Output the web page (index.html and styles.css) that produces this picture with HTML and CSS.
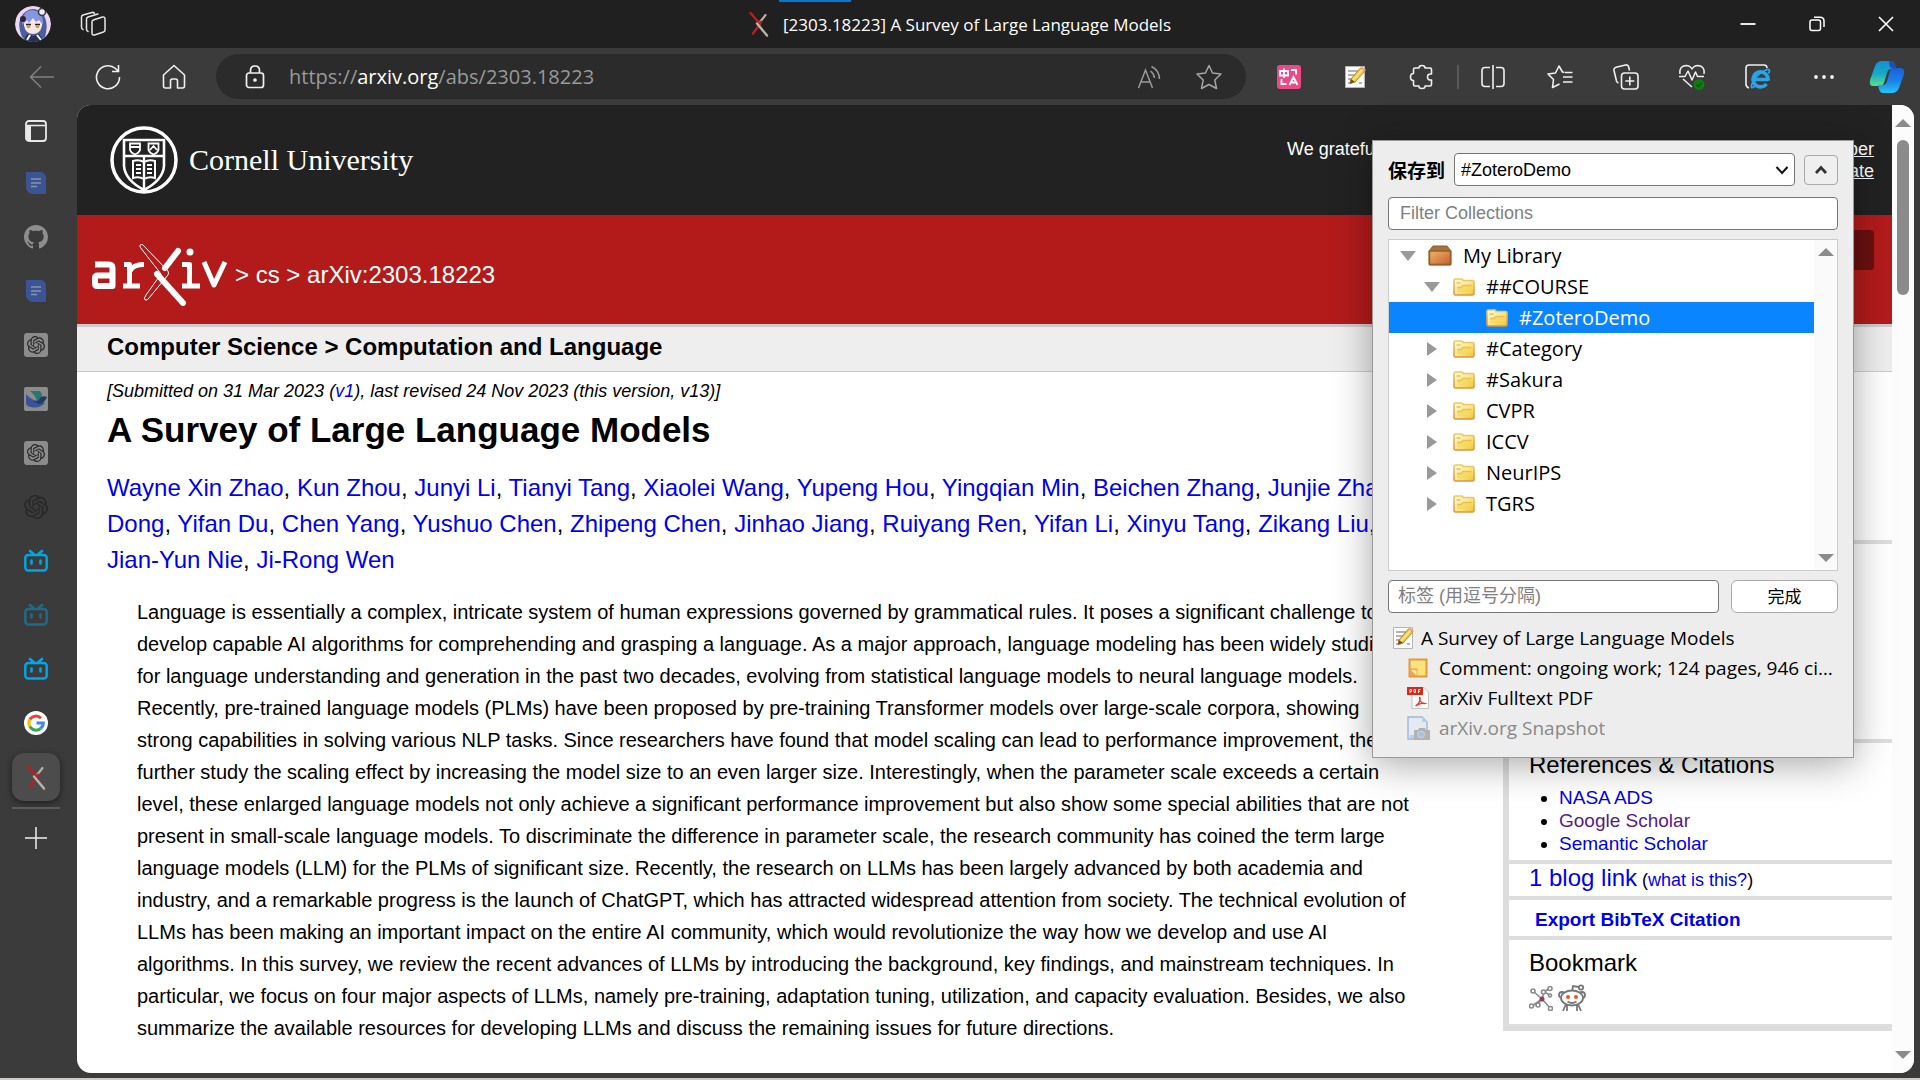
FILE: index.html
```html
<!DOCTYPE html>
<html lang="zh-CN">
<head>
<meta charset="utf-8">
<title>[2303.18223] A Survey of Large Language Models</title>
<link rel="stylesheet" href="styles.css">
</head>
<body>
<svg class="defs" width="0" height="0" aria-hidden="true">
  <defs>
    <linearGradient id="gFold" x1="0" y1="0" x2="1" y2="1"><stop offset="0" stop-color="#fffbe6"/><stop offset=".5" stop-color="#fbe690"/><stop offset="1" stop-color="#efc52c"/></linearGradient>
    <linearGradient id="gFoldEdge" x1="0" y1="0" x2="0" y2="1"><stop offset="0" stop-color="#e9cc62"/><stop offset="1" stop-color="#dd9544"/></linearGradient>
    <linearGradient id="gBox" x1="0" y1="0" x2="1" y2="1"><stop offset="0" stop-color="#eab566"/><stop offset="1" stop-color="#c9602f"/></linearGradient>
    <linearGradient id="gCopA" x1="0" y1="0" x2="0" y2="1"><stop offset="0" stop-color="#1290d8"/><stop offset=".5" stop-color="#14a9c4"/><stop offset="1" stop-color="#5fdc8a"/></linearGradient>
    <linearGradient id="gCopB" x1="0" y1="0" x2="0" y2="1"><stop offset="0" stop-color="#1c5fd8"/><stop offset=".5" stop-color="#1a7fe8"/><stop offset="1" stop-color="#27c3f5"/></linearGradient>
  </defs>
  <symbol id="folder" viewBox="0 0 22 18"><path d="M1 2.500Q1 1 2.500 1H8.500Q10 1 10 2.500H19.500Q21 2.500 21 4V15.500Q21 17 19.500 17H2.500Q1 17 1 15.500Z" fill="url(#gFold)" stroke="url(#gFoldEdge)" stroke-width="1.600"/><path d="M4 14V9.500H8L10 7.500H18.500V14Z" fill="#f3d552" opacity=".6"/><path d="M3.500 5H7.500M4 9.500H8L10 7.500H18.500" fill="none" stroke="#e8c24e" stroke-width="1.300"/></symbol>
  <symbol id="note" viewBox="0 0 22 24"><path d="M1.500 1.500H20.500V22.500H1.500Z" fill="#fbfbfb" stroke="#b5b5b5"/><path d="M4 6H14M4 10H12M4 14H9M4 18H8M15 18H18" stroke="#9a9a9a" stroke-width="1.400"/><path d="M6 18.500L7 14L16.500 3L20.500 6.500L11 17Z" fill="#f7c948" stroke="#b98518"/><path d="M16.500 3L18 1.500L22 5L20.500 6.500Z" fill="#f0a07c"/><path d="M6 18.500L7 14L11 17Z" fill="#6b5030"/><path d="M9 15L18.500 4.500" stroke="#fdeaa0" stroke-width="1.200"/></symbol>
  <symbol id="xfav" viewBox="0 0 20 26"><path d="M16.500 4L11 11" stroke="#b9b0a8" stroke-width="2.200" stroke-linecap="round"/><path d="M1.500 2L11 13M8.500 16.500L4 22.500" fill="none" stroke="#b81f25" stroke-width="2.400" stroke-linecap="round"/><path d="M12 10.500L10.500 15" stroke="#b81f25" stroke-width="2" stroke-linecap="round"/><path d="M8 12.500L18 24.500" stroke="#bdb5ad" stroke-width="2.400" stroke-linecap="round"/></symbol>
  <symbol id="doc" viewBox="0 0 20 22"><path d="M0 0H15Q20 1 20 6V22H6Q1 21 0 16Z" fill="#3a5496"/><path d="M5 7H15M5 11H15M5 14.500H11" stroke="#8a93a8" stroke-width="1.600"/></symbol>
  <symbol id="knot" viewBox="0 0 24 24"><path fill="currentColor" d="M22.282 9.821a5.985 5.985 0 0 0-.516-4.910 6.046 6.046 0 0 0-6.510-2.900A6.065 6.065 0 0 0 4.981 4.182a5.985 5.985 0 0 0-3.998 2.900 6.046 6.046 0 0 0 .743 7.097 5.980 5.980 0 0 0 .510 4.911 6.051 6.051 0 0 0 6.515 2.900A5.985 5.985 0 0 0 13.260 24a6.056 6.056 0 0 0 5.772-4.206 5.990 5.990 0 0 0 3.998-2.900 6.056 6.056 0 0 0-.748-7.073zM13.260 22.430a4.476 4.476 0 0 1-2.876-1.041l.142-.080 4.778-2.758a.795.795 0 0 0 .393-.681v-6.737l2.020 1.169a.071.071 0 0 1 .038.052v5.583a4.504 4.504 0 0 1-4.495 4.493zM3.600 18.304a4.470 4.470 0 0 1-.535-3.014l.142.085 4.783 2.759a.771.771 0 0 0 .781 0l5.843-3.369v2.332a.080.080 0 0 1-.033.062L9.740 19.950a4.500 4.500 0 0 1-6.140-1.646zM2.341 7.896a4.485 4.485 0 0 1 2.366-1.973V11.600a.766.766 0 0 0 .388.677l5.815 3.354-2.020 1.169a.076.076 0 0 1-.071 0l-4.830-2.787A4.504 4.504 0 0 1 2.341 7.872zm16.597 3.855l-5.833-3.387L15.119 7.200a.076.076 0 0 1 .071 0l4.830 2.791a4.494 4.494 0 0 1-.676 8.105v-5.678a.790.790 0 0 0-.406-.667zm2.010-3.023l-.141-.085-4.774-2.782a.776.776 0 0 0-.785 0L9.409 9.230V6.897a.066.066 0 0 1 .028-.061l4.830-2.787a4.500 4.500 0 0 1 6.680 4.660zm-12.640 4.135l-2.020-1.164a.080.080 0 0 1-.038-.057V6.075a4.500 4.500 0 0 1 7.375-3.453l-.142.080L8.704 5.460a.795.795 0 0 0-.393.681zm1.097-2.365l2.602-1.500 2.607 1.500v2.999l-2.597 1.500-2.607-1.500z"/></symbol>
  <symbol id="gpt" viewBox="0 0 24 24"><rect width="24" height="24" rx="3" fill="#8c8c8c"/><use href="#knot" x="3" y="3" width="18" height="18"/></symbol>
  <symbol id="tv" viewBox="0 0 24 24"><rect x="1.300" y="6" width="21.400" height="15.500" rx="3" fill="none" stroke="#00a7e8" stroke-width="2.400"/><path d="M6 2L9.500 5M18 2L14.500 5M7.500 11.500V14.500M16.500 11.500V14.500" stroke="#00a7e8" stroke-width="2.600" stroke-linecap="round"/></symbol>
</svg>

<div class="browser">
  <header class="titlebar">
    <div class="title-left">
      <svg class="avatar" width="36" height="36" viewBox="0 0 36 36"><circle cx="18" cy="18" r="18" fill="#ecd6f0"/><path d="M7 31Q1 17 8 8Q18-2 28 8Q34 17 30 31L25 35H11Z" fill="#4b5e9e"/><path d="M9 20V11Q18 2 27 11V20Q25 28 18 28Q11 28 9 20Z" fill="#f7e6e4"/><path d="M7 19Q7 5 17 4Q29 5 28 19L24 14L21 16L18 12L14 17L12 14Z" fill="#8795e0"/><path d="M11 18.500H16M20 18.500H25" stroke="#1f1e2a" stroke-width="1.500"/><circle cx="13.500" cy="20.500" r="1.800" fill="#d09a30"/><circle cx="22.500" cy="20.500" r="1.800" fill="#d09a30"/><path d="M8 36L12 28L18 30L24 28L29 36Z" fill="#2a3157"/><path d="M12 34L15 29M22 29L26 34" stroke="#fff" stroke-width="2"/><circle cx="8" cy="13" r="3" fill="#2b2840"/><circle cx="27" cy="6" r="3.500" fill="#eee" stroke="#37374a" stroke-width="1.500"/></svg>
      <svg width="26" height="26" viewBox="0 0 26 26" fill="none" stroke="#e6e6e6" stroke-width="1.500" stroke-linejoin="round" stroke-linecap="round"><path d="M12 11Q12 9.500 13.300 9L22.500 6Q25 5.500 25 8V19Q25 20.500 23.500 21L14.500 24Q12 24.500 12 22Z"/><path d="M8 20.500Q6.500 20 6.500 18V8Q6.500 6.500 8 6L18 3"/><path d="M3 18.500Q1.500 18 1.500 16V6Q1.500 4.500 3 4L12 1.500Q14 1 14.500 2.500"/></svg>
    </div>
    <div class="tab-title"><svg width="20" height="26"><use href="#xfav"/></svg><span>[2303.18223] A Survey of Large Language Models</span></div>
    <div class="win-controls">
      <button aria-label="Minimize"><svg width="16" height="16" viewBox="0 0 16 16"><path d="M.5 8H15.500" stroke="#fff" stroke-width="1.800"/></svg></button>
      <button aria-label="Restore"><svg width="16" height="16" viewBox="0 0 16 16" fill="none" stroke="#fff" stroke-width="1.500"><rect x="1" y="4" width="10.500" height="10.500" rx="2"/><path d="M5 1.200H11Q15 1.200 15 5V11"/></svg></button>
      <button aria-label="Close"><svg width="16" height="16" viewBox="0 0 16 16"><path d="M1 1L15 15M15 1L1 15" stroke="#fff" stroke-width="1.600"/></svg></button>
    </div>
  </header>

  <nav class="toolbar">
    <div class="tools nav-tools">
      <button aria-label="Back"><svg width="26" height="24" viewBox="0 0 26 24" fill="none" stroke="#808080" stroke-width="1.500"><path d="M25 12H2M12 1.500L1.500 12L12 22.500"/></svg></button>
      <button aria-label="Refresh"><svg width="26" height="26" viewBox="0 0 26 26" fill="none" stroke="#f0f0f0" stroke-width="1.600"><path d="M24.500 13A11.500 11.500 0 1 1 20.500 4.500L23.500 7.500M23.500 1V7.500H17"/></svg></button>
      <button aria-label="Home"><svg width="24" height="26" viewBox="0 0 24 26" fill="none" stroke="#f0f0f0" stroke-width="1.600" stroke-linejoin="round"><path d="M1.500 11L12 1.500L22.500 11V22Q22.500 24 20.500 24H15.500V17Q15.500 15 13.500 15H10.500Q8.500 15 8.500 17V24H3.500Q1.500 24 1.500 22Z"/></svg></button>
    </div>
    <div class="address">
      <svg class="lock" width="20" height="24" viewBox="0 0 20 24" fill="none" stroke="#f0f0f0" stroke-width="1.700"><rect x="1.500" y="8" width="17" height="14.500" rx="2.500"/><path d="M5.500 8V5.500Q5.500 1 10 1Q14.500 1 14.500 5.500V8"/><circle cx="10" cy="15" r="1" fill="#fff"/></svg>
      <div class="url">https://<b>arxiv.org</b>/abs/2303.18223</div>
      <button aria-label="Read aloud"><svg width="24" height="24" viewBox="0 0 24 24" fill="none" stroke="#9a9a9a" stroke-width="1.500"><path d="M1.500 23L8.500 5L15.500 23M4 17H13M13.500 6Q17 8.500 17.500 13M14.500 1.500Q22 5 22.500 14"/></svg></button>
      <button aria-label="Favorite"><svg width="26" height="26" viewBox="0 0 26 26" fill="none" stroke="#a5a5a5" stroke-width="1.500" stroke-linejoin="round"><path d="M13 1.500L16.500 9L25 10L18.800 16L20.500 24.500L13 20.500L5.500 24.500L7.200 16L1 10L9.500 9Z"/></svg></button>
    </div>
    <div class="tools ext-tools">
      <button aria-label="Translate"><svg width="24" height="24" viewBox="0 0 24 24" fill="none" stroke="#fff" stroke-width="1.800"><rect width="24" height="24" rx="3" fill="#ea4a88" stroke="none"/><path d="M3 6H11V10.500H3ZM7 3.500V13M12.500 20L16.500 12L20.500 20M14 17.500H19M14 5H19V9.500M4.500 14V19H9.500"/></svg></button>
      <button aria-label="Zotero Connector"><svg width="22" height="24"><use href="#note"/></svg></button>
      <button aria-label="Extensions"><svg width="24" height="26" viewBox="0 0 24 26" fill="none" stroke="#f0f0f0" stroke-width="1.600" stroke-linejoin="round"><path d="M10 4Q10 1.500 13 1.500Q16 1.500 16 4H21Q22.500 4 22.500 5.500V10Q18.500 9.500 18.500 13Q18.500 16.500 22.500 16V20.500Q22.500 22 21 22H16Q16.500 24.500 13 24.500Q9.500 24.500 10 22H6Q4.500 22 4.500 20.500V16.500Q1.500 16.500 1.500 13Q1.500 9.500 4.500 9.500V5.500Q4.500 4 6 4Z"/></svg></button>
      <button class="divided" aria-label="Split screen"><svg width="24" height="24" viewBox="0 0 24 24" fill="none" stroke="#f0f0f0" stroke-width="1.600"><path d="M9 2.500H4Q1 2.500 1 5.500V18.500Q1 21.500 4 21.500H9M15 2.500H20Q23 2.500 23 5.500V18.500Q23 21.500 20 21.500H15M12 0V24"/></svg></button>
      <button aria-label="Favorites"><svg width="26" height="24" viewBox="0 0 26 24" fill="none" stroke="#f0f0f0" stroke-width="1.600" stroke-linejoin="round"><path d="M17.500 7.500L15.500 7L12 1L8.500 8L1 9L6.500 14.500L5.500 22.500L12.500 19M16 12H25.500M16 17H25.500M18 7.500H25.500"/></svg></button>
      <button aria-label="Collections"><svg width="26" height="26" viewBox="0 0 26 26" fill="none" stroke="#f0f0f0" stroke-width="1.600" stroke-linejoin="round"><rect x="8.500" y="9" width="16.500" height="16" rx="3"/><path d="M16.800 12.500V21.500M12.300 17H21.300M5.500 19Q4 18.500 3.500 17L1 6.500Q.5 4 3 3.300L12.500 1Q15 .5 15.700 3L16.500 6.500"/></svg></button>
      <button aria-label="Performance"><svg width="26" height="26" viewBox="0 0 26 26" fill="none" stroke="#f0f0f0" stroke-width="1.500" stroke-linejoin="round"><path d="M1 10Q0 2 7 1.500Q11 1.500 13 5Q15 1.500 19 1.500Q26 2 25 10M0 12.500H6L9 7L13 16L16.500 8L18.500 12.500H25M4 15L13 23"/><circle cx="20" cy="20.500" r="5.500" fill="#107c10" stroke="none"/><path d="M17.500 20.500L19.500 22.500L22.500 18.500" stroke="#0a4d0a" stroke-width="1.200"/></svg></button>
      <button aria-label="IE mode"><svg width="26" height="26" viewBox="0 0 26 26" fill="none"><path d="M4 24Q1 23 1 20V4Q1 1 4 1H19Q22 1 22 4" stroke="#f0f0f0" stroke-width="1.600"/><path d="M23 16.500A7.500 7.500 0 1 0 21.500 20M9 15.500H23" stroke="#2aa5e8" stroke-width="3.600"/><path d="M10 22Q5 26 7 20Q11 10 22 5.500Q26 5 23.500 9.500" stroke="#2aa5e8" stroke-width="1.800"/></svg></button>
      <button aria-label="Settings"><svg width="22" height="6" viewBox="0 0 22 6" fill="#f0f0f0"><circle cx="3" cy="3" r="1.900"/><circle cx="11" cy="3" r="1.900"/><circle cx="19" cy="3" r="1.900"/></svg></button>
      <button aria-label="Copilot"><svg width="36" height="34" viewBox="0 0 36 34"><path d="M13 1H22Q25 1 26 5L27 9H22Q19 9 18 13L15 23Q14 26 10 26H4Q0 26 1 20L6 6Q8 1 13 1Z" fill="url(#gCopA)"/><path d="M23 33H14Q11 33 10 29L9 25H14Q17 25 18 21L21 11Q22 8 26 8H32Q36 8 35 14L30 28Q28 33 23 33Z" fill="url(#gCopB)"/><path d="M20 1H22Q25 1 26 5L27 9H24Q20 8 20 1Z" fill="#1c4fb8"/></svg></button>
    </div>
  </nav>

  <div class="workspace">
    <aside class="tabs">
      <button class="tab-menu" aria-label="Tab actions"><svg width="22" height="22" viewBox="0 0 22 22"><rect x="1" y="1" width="20" height="20" rx="3" fill="none" stroke="#e8e8e8" stroke-width="1.800"/><path d="M1 5.500H21" stroke="#e8e8e8" stroke-width="1.600"/><path d="M1 6H6V21H3L1 19Z" fill="#e8e8e8"/></svg></button>
      <button aria-label="Document"><svg width="20" height="22"><use href="#doc"/></svg></button>
      <button aria-label="GitHub"><svg width="24" height="24" viewBox="0 0 16 16" fill="#8e8e8e"><path d="M8 0C3.580 0 0 3.580 0 8c0 3.540 2.290 6.530 5.470 7.590.4.070.55-.17.55-.38 0-.19-.010-.82-.010-1.490-2.010.37-2.530-.49-2.690-.94-.090-.23-.48-.94-.82-1.130-.28-.15-.68-.52-.010-.53.63-.010 1.080.58 1.230.82.72 1.210 1.870.87 2.330.66.070-.52.28-.87.510-1.070-1.780-.2-3.640-.89-3.640-3.950 0-.87.31-1.590.82-2.150-.080-.2-.36-1.020.080-2.120 0 0 .67-.21 2.200.82.64-.18 1.320-.27 2-.27s1.360.090 2 .27c1.530-1.040 2.200-.82 2.200-.82.44 1.100.16 1.920.080 2.120.51.56.82 1.270.82 2.150 0 3.070-1.870 3.750-3.650 3.950.29.25.54.73.54 1.480 0 1.070-.010 1.930-.010 2.200 0 .21.15.46.55.38A8.010 8.010 0 0 0 16 8c0-4.420-3.580-8-8-8z"/></svg></button>
      <button aria-label="Document"><svg width="20" height="22"><use href="#doc"/></svg></button>
      <button aria-label="ChatGPT"><svg width="24" height="24"><use href="#gpt"/></svg></button>
      <button aria-label="Lark"><svg width="24" height="24" viewBox="0 0 24 24"><rect width="24" height="24" rx="2" fill="#8c8c8c"/><path d="M6 4H16Q19 8 17.500 11L13 14Q11 8 6 4Z" fill="#27796c"/><path d="M2 7Q8 14 15 14L21 16Q15 22 7 20Q2 19 2 16Z" fill="#3a5298"/><path d="M9 14Q14 15 16 11Q19 8 23 10Q20 17 15 17Z" fill="#243a66"/></svg></button>
      <button aria-label="ChatGPT"><svg width="24" height="24"><use href="#gpt"/></svg></button>
      <button aria-label="ChatGPT"><svg width="24" height="24"><use href="#knot"/></svg></button>
      <button aria-label="Bilibili"><svg width="24" height="24"><use href="#tv"/></svg></button>
      <button class="sleeping" aria-label="Bilibili"><svg width="24" height="24"><use href="#tv"/></svg></button>
      <button aria-label="Bilibili"><svg width="24" height="24"><use href="#tv"/></svg></button>
      <button aria-label="Google"><svg width="24" height="24" viewBox="0 0 24 24" fill="none" stroke-width="3"><circle cx="12" cy="12" r="12" fill="#fff"/><path d="M17 7.200A7.200 7.200 0 0 0 5.800 8.500" stroke="#ea4335"/><path d="M5.800 8.500A7.500 7.500 0 0 0 5.800 15.500" stroke="#fbbc05"/><path d="M5.800 15.500A7.200 7.200 0 0 0 16.600 17.500" stroke="#34a853"/><path d="M12.500 12H19.300Q19.300 15.500 16.600 17.500" stroke="#4285f4"/></svg></button>
      <button class="active" aria-label="arXiv"><svg width="20" height="26"><use href="#xfav"/></svg></button>
      <button class="new-tab" aria-label="New tab"><svg width="22" height="22" viewBox="0 0 22 22"><path d="M0 11H22M11 0V22" stroke="#f0f0f0" stroke-width="1.500"/></svg></button>
    </aside>

    <div class="viewport">
      <div class="page">
        <div class="cornell">
          <a class="cu-logo" href="#">
            <svg width="68" height="68" viewBox="0 0 68 68" fill="none" stroke="#fff"><circle cx="34" cy="34" r="32" stroke-width="3.500"/><path d="M14 14H54V40Q53 54 34 64Q15 54 14 40Z" stroke-width="2.600"/><path d="M14 30H54M34 30V63" stroke-width="2.400"/><path d="M20 17.500H30V24Q29 27 25 28.500Q21 27 20 24ZM38.500 17.500H48.500V24Q47.500 27 43.500 28.500Q39.500 27 38.500 24ZM20 21H30M40 24L43.500 20L47 24" stroke-width="1.800"/><path d="M23 35Q29 33 34 36Q39 33 45 35V52Q39 50 34 53Q29 50 23 52Z" stroke-width="2"/><path d="M26 39H31M26 43H31M26 47H31M37 39H42M37 43H42M37 47H42" stroke-width="1.800"/></svg>
            <span>Cornell University</span>
          </a>
          <p class="support">We gratefully acknowledge support from the Simons Foundation, <a href="#">member</a><br><a href="#">institutions</a>, and all contributors. <a href="#">Donate</a></p>
        </div>
        <div class="arxiv-bar">
          <a class="ax-logo" href="#" aria-label="arXiv">
            <svg width="136" height="62" viewBox="0 0 136 62" fill="none" stroke="#fff" stroke-width="6" stroke-linejoin="round"><path d="M3 20.500H17Q20.500 20.500 20.500 24V42H5Q3 42 3 39V34Q3 31.500 6 31.500H20"/><path d="M32 20.500H37.500V42M31 42H48M38 27Q41 20.500 52 20.500" stroke-width="5"/><path d="M90 20.500H97.500V42M90 42H108" stroke-width="5"/><path d="M112 18L122 41L133 18" stroke-width="5"/><circle cx="98" cy="8" r="3.500" fill="#fff" stroke="none"/><path d="M86 7L73 24M65 30L91 59" stroke-width="6" stroke-linecap="round"/><path d="M51 1Q48-1 48 3L69 30L54 51Q51 56 54 56Q56 56 57 54L76 31Q77 29 76 27Z" fill="none" stroke-width="1"/></svg>
          </a>
          <span class="crumb">&gt; <a href="#">cs</a> &gt; arXiv:2303.18223</span>
          <button class="search">Search</button>
        </div>
        <h1 class="subject">Computer Science &gt; Computation and Language</h1>
        <div class="content">
          <main class="abs">
            <div class="dateline">[Submitted on 31 Mar 2023 (<a href="#">v1</a>), last revised 24 Nov 2023 (this version, v13)]</div>
            <h2>A Survey of Large Language Models</h2>
            <div class="authors"><a href="#">Wayne Xin Zhao</a>, <a href="#">Kun Zhou</a>, <a href="#">Junyi Li</a>, <a href="#">Tianyi Tang</a>, <a href="#">Xiaolei Wang</a>, <a href="#">Yupeng Hou</a>, <a href="#">Yingqian Min</a>, <a href="#">Beichen Zhang</a>, <a href="#">Junjie Zhang</a>,<br><a href="#">Dong</a>, <a href="#">Yifan Du</a>, <a href="#">Chen Yang</a>, <a href="#">Yushuo Chen</a>, <a href="#">Zhipeng Chen</a>, <a href="#">Jinhao Jiang</a>, <a href="#">Ruiyang Ren</a>, <a href="#">Yifan Li</a>, <a href="#">Xinyu Tang</a>, <a href="#">Zikang Liu</a>,<br><a href="#">Jian-Yun Nie</a>, <a href="#">Ji-Rong Wen</a></div>
            <blockquote>Language is essentially a complex, intricate system of human expressions governed by grammatical rules. It poses a significant challenge to<br>develop capable AI algorithms for comprehending and grasping a language. As a major approach, language modeling has been widely studied<br>for language understanding and generation in the past two decades, evolving from statistical language models to neural language models.<br>Recently, pre-trained language models (PLMs) have been proposed by pre-training Transformer models over large-scale corpora, showing<br>strong capabilities in solving various NLP tasks. Since researchers have found that model scaling can lead to performance improvement, they<br>further study the scaling effect by increasing the model size to an even larger size. Interestingly, when the parameter scale exceeds a certain<br>level, these enlarged language models not only achieve a significant performance improvement but also show some special abilities that are not<br>present in small-scale language models. To discriminate the difference in parameter scale, the research community has coined the term large<br>language models (LLM) for the PLMs of significant size. Recently, the research on LLMs has been largely advanced by both academia and<br>industry, and a remarkable progress is the launch of ChatGPT, which has attracted widespread attention from society. The technical evolution of<br>LLMs has been making an important impact on the entire AI community, which would revolutionize the way how we develop and use AI<br>algorithms. In this survey, we review the recent advances of LLMs by introducing the background, key findings, and mainstream techniques. In<br>particular, we focus on four major aspects of LLMs, namely pre-training, adaptation tuning, utilization, and capacity evaluation. Besides, we also<br>summarize the available resources for developing LLMs and discuss the remaining issues for future directions.</blockquote>
          </main>
          <aside class="extra">
            <section class="access"></section>
            <section class="browse"></section>
            <section class="refs">
              <h3>References &amp; Citations</h3>
              <ul><li><a href="#">NASA ADS</a></li><li><a class="visited" href="#">Google Scholar</a></li><li><a href="#">Semantic Scholar</a></li></ul>
            </section>
            <section class="blog"><a class="big" href="#">1 blog link</a> (<a href="#">what is this?</a>)</section>
            <section class="bib"><a href="#">Export BibTeX Citation</a></section>
            <section class="bookmark">
              <h3>Bookmark</h3>
              <div class="marks">
                <a href="#" aria-label="BibSonomy"><svg width="24" height="26" viewBox="0 0 24 26" fill="none" stroke="#8a8a8a" stroke-width="1.600"><path d="M4 6L13 14L22 24M13 14L3 21M13 14L15 7L21 3M13 14L9 19M15 7L21 10"/><g fill="#fff"><circle cx="4" cy="6" r="2"/><circle cx="21" cy="3.500" r="2"/><circle cx="14.500" cy="7" r="2"/><circle cx="2.500" cy="21" r="2"/><circle cx="9" cy="20" r="2"/><circle cx="21.500" cy="23.500" r="2"/><circle cx="21" cy="10.500" r="1.500"/></g><circle cx="13" cy="14" r="2.500" fill="#913a66" stroke="none"/></svg></a>
                <a href="#" aria-label="Reddit"><svg width="28" height="28" viewBox="0 0 28 28" fill="#fff" stroke="#777" stroke-width="1.800"><path d="M14 8L15 2L21 3" fill="none"/><circle cx="23" cy="3.500" r="2.200"/><path d="M8 20L5 27M20 20L23 27M9 19V27M19 19V27"/><circle cx="4" cy="11" r="3"/><circle cx="24" cy="11" r="3"/><ellipse cx="14" cy="14" rx="11" ry="7.500"/><path d="M9.500 17.500Q14 20.500 18.500 17.500" fill="none"/><circle cx="10" cy="13" r="2" fill="#ff4a1c" stroke="none"/><circle cx="18" cy="13" r="2" fill="#ff4a1c" stroke="none"/></svg></a>
              </div>
            </section>
          </aside>
        </div>
      </div>
      <div class="scrollbar"><i class="up"></i><i class="thumb"></i><i class="down"></i></div>
    </div>
  </div>
  <footer class="taskbar-edge"></footer>
</div>

<form class="popup">
  <div class="row target">
    <label for="dest">保存到</label>
    <div class="pick"><select id="dest"><option>#ZoteroDemo</option></select><svg width="14" height="10" viewBox="0 0 14 10"><path d="M1.500 2L7 8L12.500 2" fill="none" stroke="#111" stroke-width="2"/></svg></div>
    <button type="button" class="fold" aria-label="Collapse"><svg width="12" height="10" viewBox="0 0 12 10"><path d="M1 8L6 2.500L11 8" fill="none" stroke="#333" stroke-width="2.800"/></svg></button>
  </div>
  <input class="filter" type="text" placeholder="Filter Collections" aria-label="Filter Collections">
  <div class="tree">
    <ul>
      <li><i class="open"></i><svg class="lib" width="24" height="21" viewBox="0 0 24 21"><path d="M1 6L5 1H19L23 6V19Q23 20 22 20H2Q1 20 1 19Z" fill="#a8713a" stroke="#8d5b2b"/><path d="M1.500 6H22.500V19.500H1.500Z" fill="url(#gBox)" stroke="#9a5c26" stroke-width="1.500"/></svg>My Library</li>
      <li class="l1"><i class="open"></i><svg width="22" height="18"><use href="#folder"/></svg>##COURSE</li>
      <li class="l2 selected"><svg width="22" height="18"><use href="#folder"/></svg>#ZoteroDemo</li>
      <li class="l1"><i class="shut"></i><svg width="22" height="18"><use href="#folder"/></svg>#Category</li>
      <li class="l1"><i class="shut"></i><svg width="22" height="18"><use href="#folder"/></svg>#Sakura</li>
      <li class="l1"><i class="shut"></i><svg width="22" height="18"><use href="#folder"/></svg>CVPR</li>
      <li class="l1"><i class="shut"></i><svg width="22" height="18"><use href="#folder"/></svg>ICCV</li>
      <li class="l1"><i class="shut"></i><svg width="22" height="18"><use href="#folder"/></svg>NeurIPS</li>
      <li class="l1"><i class="shut"></i><svg width="22" height="18"><use href="#folder"/></svg>TGRS</li>
    </ul>
    <div class="tree-scroll"><i class="up"></i><i class="down"></i></div>
  </div>
  <div class="row tags">
    <input type="text" placeholder="标签 (用逗号分隔)" aria-label="标签">
    <button type="button">完成</button>
  </div>
  <ul class="items">
    <li class="parent"><svg width="22" height="24"><use href="#note"/></svg><span>A Survey of Large Language Models</span></li>
    <li><svg width="24" height="24" viewBox="0 0 24 24"><path d="M3.500 3.500H20.500V20.500H3.500Z" fill="#fbe27c" stroke="#e39a3a" stroke-width="2"/><path d="M4 12.500H11.500V20H4Z" fill="#f0a646"/><path d="M5 14L10.500 19.500V14.500Z" fill="#fff3c8"/></svg><span>Comment: ongoing work; 124 pages, 946 citations</span></li>
    <li><svg width="24" height="24" viewBox="0 0 24 24"><path d="M6 1.500H18L22.500 6V22.500H6Z" fill="#fafafa" stroke="#c4c4c4"/><path d="M1 1H17V9H1Z" fill="#df2418"/><path d="M4 7V3.500H5.500V5.500H4M8 3.500V6.500H9.500V3.500ZM12.500 7V3.500H14.500M12.500 5.300H14" fill="none" stroke="#fff" stroke-width=".9"/><path d="M9.500 20Q13 18 14 14.500Q14.500 11 13.500 11.500Q13 14 15.500 16.500Q17 18 19.500 17.500Q16 16 9.500 20Z" fill="none" stroke="#e8352b" stroke-width="1.200"/></svg><span>arXiv Fulltext PDF</span></li>
    <li class="pending"><svg width="24" height="24" viewBox="0 0 24 24"><path d="M2 1H16L21 6V23H2Z" fill="#dfeaf8" stroke="#7f9fcb" stroke-width="1.400"/><path d="M16 1V6H21Z" fill="#a9c0df"/><path d="M4 19H9V22H4Z" fill="#8ecdf0"/><path d="M8 14H12L13 12H19L20 14H24V24H8Z" fill="#9a9a9a"/><circle cx="15" cy="18.500" r="3.500" fill="#8fb0d8" stroke="#c8c8c8"/></svg><span>arXiv.org Snapshot</span></li>
  </ul>
</form>
</body>
</html>
```
FILE: styles.css
```css
* { box-sizing: border-box; }
body { margin: 0; font-family: "Liberation Sans", Arial, sans-serif; color: #000; background: #3b3b3b; overflow: hidden; }
a { color: #0000ee; text-decoration: none; }
button { padding: 0; border: 0; background: none; font: inherit; }
svg { display: block; flex: none; }
ul, p, h1, h2, h3, blockquote { margin: 0; padding: 0; }
ul { list-style: none; }
.defs { position: absolute; }

.browser { height: 100vh; display: flex; flex-direction: column; }
.browser button, .popup button { display: flex; align-items: center; justify-content: center; }

/* window title bar */
.titlebar { height: 48px; flex: none; background: #202020; display: grid; grid-template-columns: 1fr auto 1fr; align-items: center; position: relative; }
.titlebar::before { content: ""; position: absolute; top: 0; left: 779px; width: 72px; height: 2px; background: #0078d4; }
.title-left { display: flex; align-items: center; gap: 29px; padding-left: 15px; }
.avatar { border-radius: 50%; }
.tab-title { display: flex; align-items: center; gap: 14px; color: #fff; font: 17px/24px "Open Sans", "Noto Sans", sans-serif; }
.tab-title span { padding-top: 2px; }
.win-controls { display: flex; justify-content: flex-end; }
.win-controls button { width: 69px; height: 48px; }

/* toolbar */
.toolbar { height: 57px; flex: none; display: flex; align-items: center; }
.tools { display: flex; flex: none; }
.tools button { width: 66px; height: 48px; flex: none; }
.nav-tools { padding: 0 9px; }
.address { flex: 1; height: 45px; border-radius: 23px; background: #2b2b2b; display: flex; align-items: center; padding: 0 7px 0 29px; }
.address button { width: 60px; height: 40px; }
.url { flex: 1; padding-left: 24px; color: #9a9a9a; font: 20px/28px "Open Sans", "Noto Sans", sans-serif; }
.url b { color: #fff; font-weight: 400; }
.ext-tools { padding: 0 3px 0 10px; }
.tools .divided { width: 70px; border-left: 2px solid #595959; height: 24px; margin: 12px 0 12px 3px; }
.tools button[aria-label="Copilot"] { width: 60px; }

.workspace { flex: 1; min-height: 0; display: flex; padding-right: 6px; }

/* vertical tab strip */
.tabs { width: 77px; flex: none; display: flex; flex-direction: column; }
.tabs button { width: 72px; height: 54px; color: #282828; }
.tabs .tab-menu { height: 51px; }
.tabs .sleeping { opacity: .45; }
.tabs .active { width: 48px; height: 48px; margin: 3px 12px; border-radius: 12px; background: #4c4c4c; box-shadow: 0 2px 6px rgba(0, 0, 0, .5); }
.tabs .new-tab { width: 48px; height: 60px; margin: 3px 12px; border-top: 2px solid #5a5a5a; }

.viewport { flex: 1; min-width: 0; display: flex; border-radius: 14px; overflow: hidden; background: #fff; }
.page { flex: 1; min-width: 0; }
.scrollbar { width: 22px; background: #fcfcfc; display: flex; flex-direction: column; align-items: center; padding: 14px 0; }
.scrollbar .thumb { width: 12px; height: 155px; margin-top: 13px; border-radius: 6px; background: #8b8b8b; }
.up, .down { border: 8px solid transparent; border-top-width: 0; border-bottom: 8px solid #8b8b8b; }
.down { margin-top: auto; border-bottom-width: 0; border-top: 8px solid #8b8b8b; }

/* university header */
.cornell { height: 110px; background: #222; color: #fff; display: flex; justify-content: space-between; padding: 21px 18px 0 33px; }
.cu-logo { display: flex; gap: 11px; height: 68px; align-items: center; color: #fff; font: 30px/40px "Liberation Serif", "Times New Roman", serif; }
.support { text-align: right; font-size: 18px; line-height: 22px; padding-top: 12px; }
.support a { color: #fff; text-decoration: underline; }
.arxiv-bar { height: 109px; background: #b31b1b; color: #fff; display: flex; align-items: center; padding: 10px 18px 0 15px; }
.crumb { flex: 1; padding-left: 7px; font-size: 24px; line-height: 28px; }
.crumb a { color: #fff; }
.arxiv-bar .search { align-self: flex-start; margin-top: 5px; width: 96px; height: 40px; border-radius: 4px; background: #6b1010; color: #fff; font-size: 18px; }
.subject { border-top: 3px solid #ccc; border-bottom: 1px solid #ccc; background: #eee; padding: 6px 30px 10px; font-size: 24px; line-height: 28px; }

.content { display: flex; align-items: flex-start; }
.abs { flex: 1; min-width: 0; padding: 8px 0 0 30px; white-space: nowrap; }
.dateline { font-size: 18px; line-height: 22px; font-style: italic; }
h2 { font-size: 35px; line-height: 40px; margin-top: 8px; }
.authors { font-size: 24px; line-height: 36px; margin-top: 20px; }
.abs blockquote { font-size: 20px; line-height: 32px; margin: 18px 0 0 30px; }

/* right column */
.extra { width: 389px; flex: none; border-left: 6px solid #ddd; border-bottom: 3px solid #ddd; background: #fff; }
.extra section { border-bottom: 4px solid #ddd; padding: 0 20px; }
.access { height: 172px; }
.browse { height: 199px; }
.extra h3 { font-size: 24px; line-height: 28px; font-weight: 400; }
.extra .refs { padding-top: 8px; padding-bottom: 5px; }
.refs ul { list-style: disc; padding: 7px 0 0 30px; font-size: 19px; line-height: 23px; }
.visited { color: #551a8b; }
.blog { font-size: 18px; line-height: 30px; height: 36px; }
.blog .big { font-size: 24px; line-height: 28px; }
.extra .bib { padding: 7px 26px 3px; font-size: 19px; line-height: 26px; font-weight: 700; }
.extra .bookmark { padding-top: 9px; padding-bottom: 12px; }
.marks { display: flex; align-items: center; gap: 5px; padding-top: 7px; }

.taskbar-edge { height: 2px; margin-top: 5px; flex: none; background: #cdcaca; }

/* save popup */
.popup { position: absolute; top: 140px; right: 66px; width: 482px; padding: 12px 15px 14px; border: 1px solid #999; background: #ededed; box-shadow: 0 6px 36px rgba(0, 0, 0, .35); font-family: "Open Sans", "Noto Sans", "Noto Sans CJK SC", sans-serif; }
.row { display: flex; align-items: center; }
.target label { width: 66px; font: 700 19px/28px "Noto Sans CJK SC", sans-serif; }
.pick { flex: 1; display: grid; align-items: center; }
.pick > * { grid-area: 1 / 1; }
.pick svg { justify-self: end; margin-right: 6px; pointer-events: none; }
.pick select { appearance: none; width: 100%; height: 33px; padding: 0 6px; border: 1px solid #767676; border-radius: 4px; background: #fff; color: #000; font: 18px/24px "Liberation Sans", Arial, sans-serif; }
.popup .fold { width: 34px; height: 30px; margin-left: 9px; border: 1px solid #aaa; border-radius: 4px; background: #efefef; }
.popup input { height: 33px; padding: 0 11px; border: 1px solid #767676; border-radius: 4px; background: #fff; font: 18px/24px "Liberation Sans", "Noto Sans CJK SC", sans-serif; }
.popup input::placeholder { color: #808080; opacity: 1; }
.popup .filter { display: block; width: 100%; margin: 11px 0 9px; }
.tree { display: flex; height: 332px; border: 1px solid #ccc; background: #fff; }
.tree ul { flex: 1; }
.tree li { display: flex; align-items: center; height: 31px; padding-left: 11px; font-size: 20px; line-height: 28px; }
.tree li svg { margin-right: 11px; }
.tree .l1 { padding-left: 35px; }
.tree .l2 { padding-left: 97px; }
.tree .selected { background: #0a84ff; color: #fff; }
.open { border: 8px solid transparent; border-top: 10px solid #999; border-bottom: 0; margin-right: 12px; }
.l1 .open { margin-right: 13px; }
.shut { border: 7px solid transparent; border-left: 10px solid #999; border-right: 0; margin: 0 16px 0 3px; }
.tree-scroll { width: 23px; background: #fafafa; display: flex; flex-direction: column; align-items: center; padding: 8px 0; }
.tags { gap: 12px; margin-top: 9px; }
.popup .tags input { flex: 1; min-width: 0; padding: 0 9px; }
.popup .tags button { width: 107px; height: 33px; padding-bottom: 2px; border: 1px solid #aaa; border-radius: 6px; background: #fff; font: 17px/24px "Noto Sans CJK SC", sans-serif; }
.items { padding: 10px 0 0 18px; font-size: 19px; line-height: 30px; }
.items li { display: flex; align-items: center; gap: 9px; height: 30px; }
.items .parent { margin-left: -14px; gap: 7px; }
.items span { min-width: 0; overflow: hidden; text-overflow: ellipsis; white-space: nowrap; }
.pending { color: #888; }
.pending svg { opacity: .7; }
```
